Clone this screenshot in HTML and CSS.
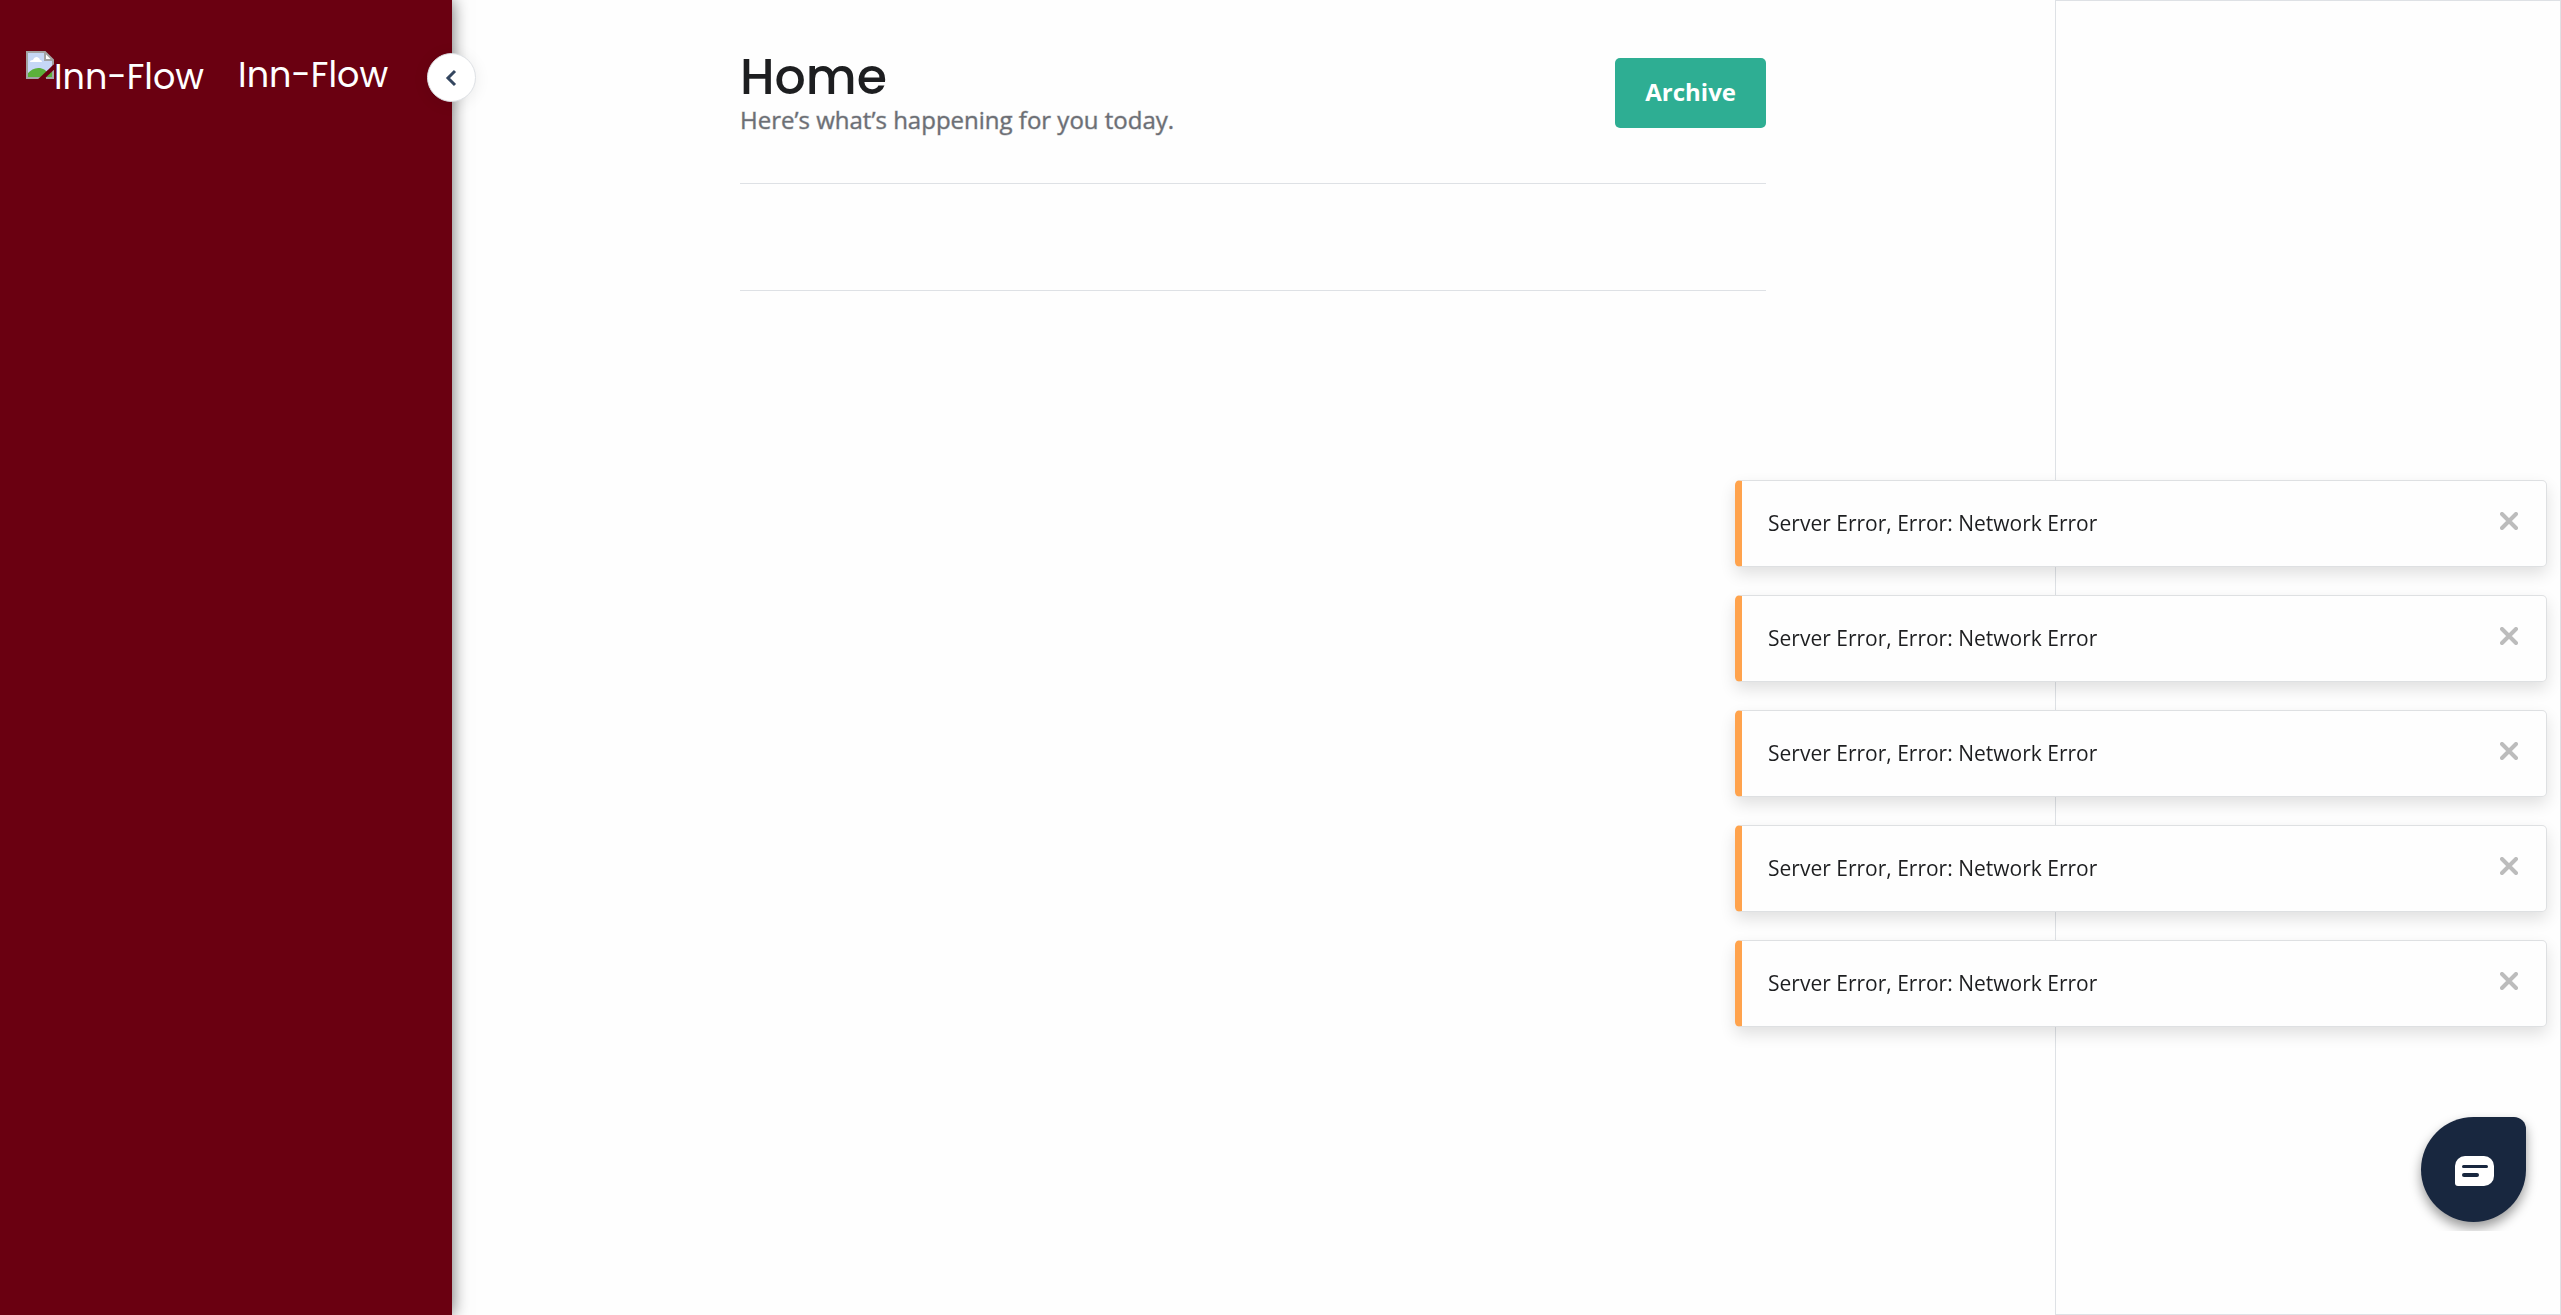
FILE: index.html
```html
<!DOCTYPE html>
<html lang="en">
<head>
<meta charset="utf-8">
<title>Home | Inn-Flow</title>
<meta name="viewport" content="width=device-width, initial-scale=1">
<link rel="stylesheet" href="styles.css">
</head>
<body>
<div class="app">
  <aside class="sidebar">
    <a class="brand" href="#">
      <span class="brand-logo">
        <svg class="brand-image" viewBox="0 0 28 28" aria-hidden="true">
          <path fill="#c6d7f6" d="M1 1h18l8 8v5L16 27H1z"/>
          <path fill="#fff" d="M4 11q0-2 3-2 1-3 4-3 3 1 3 3 2 0 2 2z"/>
          <path fill="#5bb03a" d="M1 23q6-7 13-6 5 1 7 4l-6 6H1zM27 18v9h-8z"/>
          <path fill="#fff" d="M19 1v8h8z"/>
          <path fill="none" stroke="#a3a3a3" stroke-width="2" d="M15 27H1V1h18l8 8v5M19 1v8h8M20 27h7v-8"/>
          <path fill="none" stroke="#6a0011" stroke-width="4" d="M13 30L30 14"/>
        </svg>
        <span>Inn-Flow</span>
      </span>
      <span class="brand-name">Inn-Flow</span>
    </a>
    <button class="collapse" type="button" aria-label="Collapse menu">
      <svg viewBox="0 0 16 18" aria-hidden="true"><path d="M11 2L4 9l7 7"/></svg>
    </button>
  </aside>
  <main class="main">
    <header class="page-header">
      <div>
        <h1>Home</h1>
        <p>Here’s what’s happening for you today.</p>
      </div>
      <button class="archive" type="button">Archive</button>
    </header>
    <section class="summary" aria-label="Summary"></section>
  </main>
  <aside class="panel" aria-label="Activity"></aside>
</div>
<div class="toasts">
  <div class="toast" role="alert"><span>Server Error, Error: Network Error</span><button type="button" aria-label="Close"><svg viewBox="0 0 18 18" aria-hidden="true"><path d="M2 2l14 14M16 2L2 16"/></svg></button></div>
  <div class="toast" role="alert"><span>Server Error, Error: Network Error</span><button type="button" aria-label="Close"><svg viewBox="0 0 18 18" aria-hidden="true"><path d="M2 2l14 14M16 2L2 16"/></svg></button></div>
  <div class="toast" role="alert"><span>Server Error, Error: Network Error</span><button type="button" aria-label="Close"><svg viewBox="0 0 18 18" aria-hidden="true"><path d="M2 2l14 14M16 2L2 16"/></svg></button></div>
  <div class="toast" role="alert"><span>Server Error, Error: Network Error</span><button type="button" aria-label="Close"><svg viewBox="0 0 18 18" aria-hidden="true"><path d="M2 2l14 14M16 2L2 16"/></svg></button></div>
  <div class="toast" role="alert"><span>Server Error, Error: Network Error</span><button type="button" aria-label="Close"><svg viewBox="0 0 18 18" aria-hidden="true"><path d="M2 2l14 14M16 2L2 16"/></svg></button></div>
</div>
<div class="chat">
  <button type="button" aria-label="Open chat">
    <svg viewBox="0 0 39 30" aria-hidden="true">
      <path fill="#fff" d="M10 0h19a10 10 0 0 1 10 10v10a10 10 0 0 1-10 10H3a3 3 0 0 1-3-3V10A10 10 0 0 1 10 0z"/>
      <path fill="none" stroke="#18273f" stroke-width="3" stroke-linecap="round" d="M8.500 10.500h23"/>
      <path fill="none" stroke="#18273f" stroke-width="4" stroke-linecap="round" d="M9 19h13"/>
    </svg>
  </button>
</div>
</body>
</html>
```
FILE: styles.css
```css
* { box-sizing: border-box; }

body {
  margin: 0;
  background: #fefefe;
  color: #1d1e20;
  font-family: "Open Sans", "Noto Sans", sans-serif;
}

button {
  border: 0;
  padding: 0;
  font: inherit;
  cursor: pointer;
}

svg { display: block; }

.app {
  display: flex;
  min-height: 100vh;
}

.sidebar {
  position: relative;
  flex: none;
  width: 452px;
  padding: 49px 26px;
  background: #6a0011;
  box-shadow: 0 0 16px rgba(0, 0, 0, 0.6);
}

.brand {
  display: flex;
  gap: 34px;
  color: #fff;
  font: 35px/52px Poppins, Inter, sans-serif;
  text-decoration: none;
}

.brand-logo {
  display: flex;
  padding-top: 2px;
}

.brand-image {
  width: 28px;
  height: 28px;
}

.collapse {
  position: absolute;
  top: 53px;
  right: -24px;
  display: grid;
  place-items: center;
  width: 49px;
  height: 49px;
  border: 1px solid #dee1e5;
  border-radius: 50%;
  background: #fff;
  box-shadow: 0 2px 16px rgba(0, 0, 0, 0.08);
}

.collapse svg {
  width: 16px;
  height: 18px;
  fill: none;
  stroke: #34465f;
  stroke-width: 3;
}

.main {
  flex: 1;
  padding: 48px 289px 48px 288px;
}

.page-header {
  display: flex;
  justify-content: space-between;
  align-items: flex-start;
  height: 136px;
  padding-top: 10px;
  border-bottom: 1px solid #dee1e5;
}

h1 {
  margin: 0;
  font: 500 49px/38px Poppins, Inter, sans-serif;
}

.page-header p {
  margin: 6px 0 0;
  color: #6c6f75;
  font-size: 24px;
  -webkit-text-stroke: 1px #6c6f7566;
  line-height: 36px;
}

.archive {
  height: 70px;
  padding: 0 30px 3px;
  border-radius: 5px;
  background: #2eae93;
  color: #fff;
  font-size: 24px;
  font-weight: 700;
}

.summary {
  height: 107px;
  border-bottom: 1px solid #dee1e5;
}

.panel {
  flex: none;
  width: 506px;
  border: 1px solid #dee1e5;
}

.toasts {
  position: fixed;
  right: 14px;
  bottom: 288px;
  display: grid;
  gap: 28px;
  width: 812px;
}

.toast {
  display: flex;
  justify-content: space-between;
  height: 87px;
  padding: 25px 28px 0 26px;
  border: 1px solid #dee0e2;
  border-left: 7px solid #ffa34d;
  border-radius: 5px;
  background: #fefefe;
  box-shadow: 0 7px 16px rgba(0, 0, 0, 0.12);
  font-size: 21px;
  line-height: 34px;
}

.toast button {
  width: 18px;
  height: 30px;
  background: none;
}

.toast svg {
  width: 18px;
  height: 18px;
  stroke: #bcbcbc;
  stroke-width: 4;
  stroke-linecap: round;
}

.chat {
  position: fixed;
  right: 0;
  bottom: 84px;
  padding: 30px 35px 9px;
  overflow: hidden;
}

.chat button {
  display: grid;
  place-items: center;
  width: 105px;
  height: 105px;
  padding: 3px 0 0 2px;
  border-radius: 50% 12px 50% 50%;
  background: #18273f;
  box-shadow: 0 6px 12px rgba(0, 0, 0, 0.4);
}

.chat svg {
  width: 39px;
  height: 30px;
}
```
